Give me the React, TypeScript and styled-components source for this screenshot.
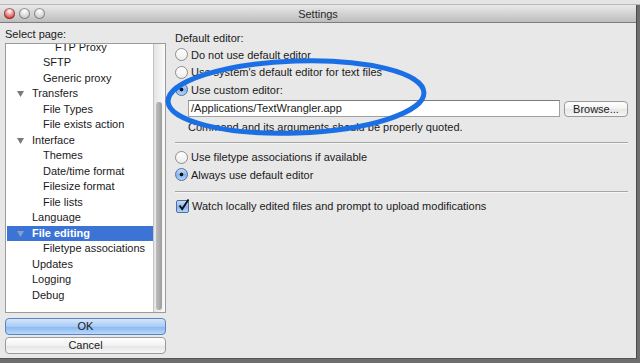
import styled, { createGlobalStyle } from 'styled-components';

const GlobalStyle = createGlobalStyle`
  html, body {
    margin: 0;
    padding: 0;
    background: #6e6e6e;
  }
  body {
    font-family: 'Liberation Sans', Arial, sans-serif;
    font-size: 11px;
    color: #1a1a1a;
  }
`;

type TreeItem = {
  label: string;
  level: number;
  expanded?: boolean;
  selected?: boolean;
};

const TREE: TreeItem[] = [
  { label: 'FTP Proxy', level: 2 },
  { label: 'SFTP', level: 1 },
  { label: 'Generic proxy', level: 1 },
  { label: 'Transfers', level: 0, expanded: true },
  { label: 'File Types', level: 1 },
  { label: 'File exists action', level: 1 },
  { label: 'Interface', level: 0, expanded: true },
  { label: 'Themes', level: 1 },
  { label: 'Date/time format', level: 1 },
  { label: 'Filesize format', level: 1 },
  { label: 'File lists', level: 1 },
  { label: 'Language', level: 0 },
  { label: 'File editing', level: 0, expanded: true, selected: true },
  { label: 'Filetype associations', level: 1 },
  { label: 'Updates', level: 0 },
  { label: 'Logging', level: 0 },
  { label: 'Debug', level: 0 },
];

const INDENT = [25, 36, 48];

const App = (): JSX.Element => {
  return (
    <>
      <GlobalStyle />
      <Screen>
        <BackStrip />
        <Window>
          <TitleBar>
            <Lights>
              <Light $color="#e0443e" />
              <Light $color="#c9c9c9" />
              <Light $color="#c9c9c9" />
            </Lights>
            <Title>Settings</Title>
          </TitleBar>
          <Body>
            <Sidebar>
              <Label>Select page:</Label>
              <ListBox>
                <ListInner>
                  {TREE.map((item) => (
                    <Row key={item.label} $selected={!!item.selected}>
                      {item.expanded && (
                        <Arrow width="7" height="6" viewBox="0 0 7 6">
                          <path d="M0 0 H7 L3.5 6 Z" fill={item.selected ? '#8a9fc4' : '#7a7a7a'} />
                        </Arrow>
                      )}
                      <RowText $indent={INDENT[item.level]} $selected={!!item.selected}>
                        {item.label}
                      </RowText>
                    </Row>
                  ))}
                </ListInner>
                <ScrollTrack>
                  <ScrollThumb />
                </ScrollTrack>
              </ListBox>
              <Button $primary>OK</Button>
              <Button>Cancel</Button>
            </Sidebar>
            <Main>
              <Label>Default editor:</Label>
              <OptionRow>
                <Radio />
                <span>Do not use default editor</span>
              </OptionRow>
              <OptionRow>
                <Radio />
                <span>Use system's default editor for text files</span>
              </OptionRow>
              <OptionRow>
                <Radio $checked />
                <span>Use custom editor:</span>
              </OptionRow>
              <EditorRow>
                <TextInput>/Applications/TextWrangler.app</TextInput>
                <BrowseButton>Browse...</BrowseButton>
              </EditorRow>
              <Hint>Command and its arguments should be properly quoted.</Hint>
              <Separator />
              <OptionRow>
                <Radio />
                <span>Use filetype associations if available</span>
              </OptionRow>
              <OptionRow>
                <Radio $checked />
                <span>Always use default editor</span>
              </OptionRow>
              <Separator />
              <OptionRow>
                <Checkbox>
                  <svg width="13" height="13" viewBox="0 0 13 13">
                    <path d="M2.5 6.5 L5.2 10 L11.5 0.5" fill="none" stroke="#111" strokeWidth="1.9" />
                  </svg>
                </Checkbox>
                <span>Watch locally edited files and prompt to upload modifications</span>
              </OptionRow>
              <Circle width="274" height="90" viewBox="0 0 274 90">
                <ellipse
                  cx="136"
                  cy="45"
                  rx="128"
                  ry="36"
                  fill="none"
                  stroke="#1b6fe4"
                  strokeWidth="5"
                  transform="rotate(-2 136 45)"
                />
              </Circle>
            </Main>
          </Body>
        </Window>
      </Screen>
    </>
  );
};

export default App;

const Screen = styled.div`
  width: 640px;
  height: 363px;
  overflow: hidden;
  background: #6e6e6e;
`;

const BackStrip = styled.div`
  height: 4px;
  background: #e4e4e4;
  border-bottom: 1px solid #b8b8b8;
`;

const Window = styled.div`
  width: 636px;
  height: 353px;
  background: #e8e8e8;
  border-right: 1px solid #4a4a4a;
  border-bottom: 1px solid #555;
  display: flex;
  flex-direction: column;
`;

const TitleBar = styled.div`
  height: 17px;
  flex: none;
  position: relative;
  display: flex;
  align-items: center;
  justify-content: center;
  background: linear-gradient(#e9e9e9, #cfcfcf 60%, #bdbdbd);
  border-bottom: 1px solid #7d7d7d;
`;

const Lights = styled.div`
  position: absolute;
  left: 4px;
  top: 3px;
  display: flex;
  gap: 4px;
`;

const Light = styled.div<{ $color: string }>`
  width: 11px;
  height: 11px;
  border-radius: 50%;
  background: radial-gradient(circle at 50% 30%, #ffffff 0, ${({ $color }) => $color} 70%);
  box-shadow: inset 0 0 0 1px rgba(0, 0, 0, 0.35);
`;

const Title = styled.div`
  font-size: 11px;
  color: #2a2a2a;
`;

const Body = styled.div`
  flex: 1;
  display: flex;
`;

const Sidebar = styled.div`
  width: 161px;
  flex: none;
  padding: 4px 0 0 5px;
  display: flex;
  flex-direction: column;
`;

const Label = styled.div`
  height: 15px;
  line-height: 15px;
`;

const ListBox = styled.div`
  margin-top: 1px;
  height: 268px;
  position: relative;
  overflow: hidden;
  background: #fff;
  border: 1px solid #9a9a9a;
  margin-bottom: 5px;
`;

const ListInner = styled.div`
  margin-top: -4px;
  margin-left: 1px;
  width: 146px;
`;

const Row = styled.div<{ $selected: boolean }>`
  height: 15.47px;
  line-height: 15.47px;
  position: relative;
  background: ${({ $selected }) => ($selected ? '#3c74d5' : 'transparent')};
  white-space: nowrap;
`;

const Arrow = styled.svg`
  position: absolute;
  left: 10px;
  top: 5px;
`;

const RowText = styled.span<{ $indent: number; $selected: boolean }>`
  padding-left: ${({ $indent }) => $indent}px;
  color: ${({ $selected }) => ($selected ? '#fff' : '#1a1a1a')};
  font-weight: ${({ $selected }) => ($selected ? 'bold' : 'normal')};
`;

const ScrollTrack = styled.div`
  position: absolute;
  right: 0;
  top: 0;
  bottom: 0;
  width: 11px;
  background: linear-gradient(90deg, #e4e4e4, #fafafa);
  border-left: 1px solid #c4c4c4;
`;

const ScrollThumb = styled.div`
  position: absolute;
  left: 2px;
  width: 6px;
  top: 58px;
  bottom: 2px;
  border-radius: 3px;
  background: linear-gradient(90deg, #bdbdbd, #9d9d9d);
`;

const Button = styled.div<{ $primary?: boolean }>`
  height: 15px;
  line-height: 15px;
  text-align: center;
  border-radius: 4px;
  margin-bottom: 2px;
  border: 1px solid ${({ $primary }) => ($primary ? '#5b83c0' : '#9a9a9a')};
  background: ${({ $primary }) =>
    $primary
      ? 'linear-gradient(#d4e6fb, #a9cbf5 50%, #86b6f0 51%, #b8d8fb)'
      : 'linear-gradient(#ffffff, #f2f2f2 50%, #e6e6e6 51%, #f6f6f6)'};
`;

const Main = styled.div`
  flex: 1;
  position: relative;
  padding: 8px 8px 0 9px;
  display: flex;
  flex-direction: column;
`;

const OptionRow = styled.div`
  height: 17.5px;
  display: flex;
  align-items: center;
  gap: 3px;
  white-space: nowrap;
`;

const Radio = styled.div<{ $checked?: boolean }>`
  width: 11px;
  height: 11px;
  border-radius: 50%;
  border: 1px solid ${({ $checked }) => ($checked ? '#4d6f9e' : '#8d8d8d')};
  background: ${({ $checked }) =>
    $checked
      ? 'radial-gradient(circle, #111 0 1.6px, transparent 2.2px), linear-gradient(#c9def7, #86b4ee 55%, #b4d5fb)'
      : 'linear-gradient(#ffffff, #ededed)'};
  flex: none;
`;

const Checkbox = styled.div`
  width: 11px;
  height: 11px;
  margin-left: 1px;
  border-radius: 2px;
  border: 1px solid #4d6f9e;
  background: linear-gradient(#c9def7, #86b4ee 55%, #b4d5fb);
  flex: none;
  display: flex;
  svg {
    margin-top: -2px;
    flex: none;
  }
`;

const EditorRow = styled.div`
  margin: 1px 0 0 13px;
  display: flex;
  gap: 4px;
  align-items: flex-end;
`;

const TextInput = styled.div`
  flex: 1;
  height: 15px;
  line-height: 15px;
  padding-left: 2px;
  background: #fff;
  border: 1px solid #a0a0a0;
  border-top-color: #7c7c7c;
`;

const BrowseButton = styled.div`
  width: 62px;
  height: 14px;
  line-height: 14px;
  text-align: center;
  border-radius: 4px;
  border: 1px solid #9a9a9a;
  background: linear-gradient(#ffffff, #f2f2f2 50%, #e6e6e6 51%, #f6f6f6);
`;

const Hint = styled.div`
  margin: 3px 0 0 13px;
  height: 15px;
  line-height: 15px;
`;

const Separator = styled.div`
  margin: 7px 0 5px;
  border-top: 1px solid #a6a6a6;
  border-bottom: 1px solid #f6f6f6;
`;

const Circle = styled.svg`
  position: absolute;
  left: -6px;
  top: 29px;
  pointer-events: none;
`;
